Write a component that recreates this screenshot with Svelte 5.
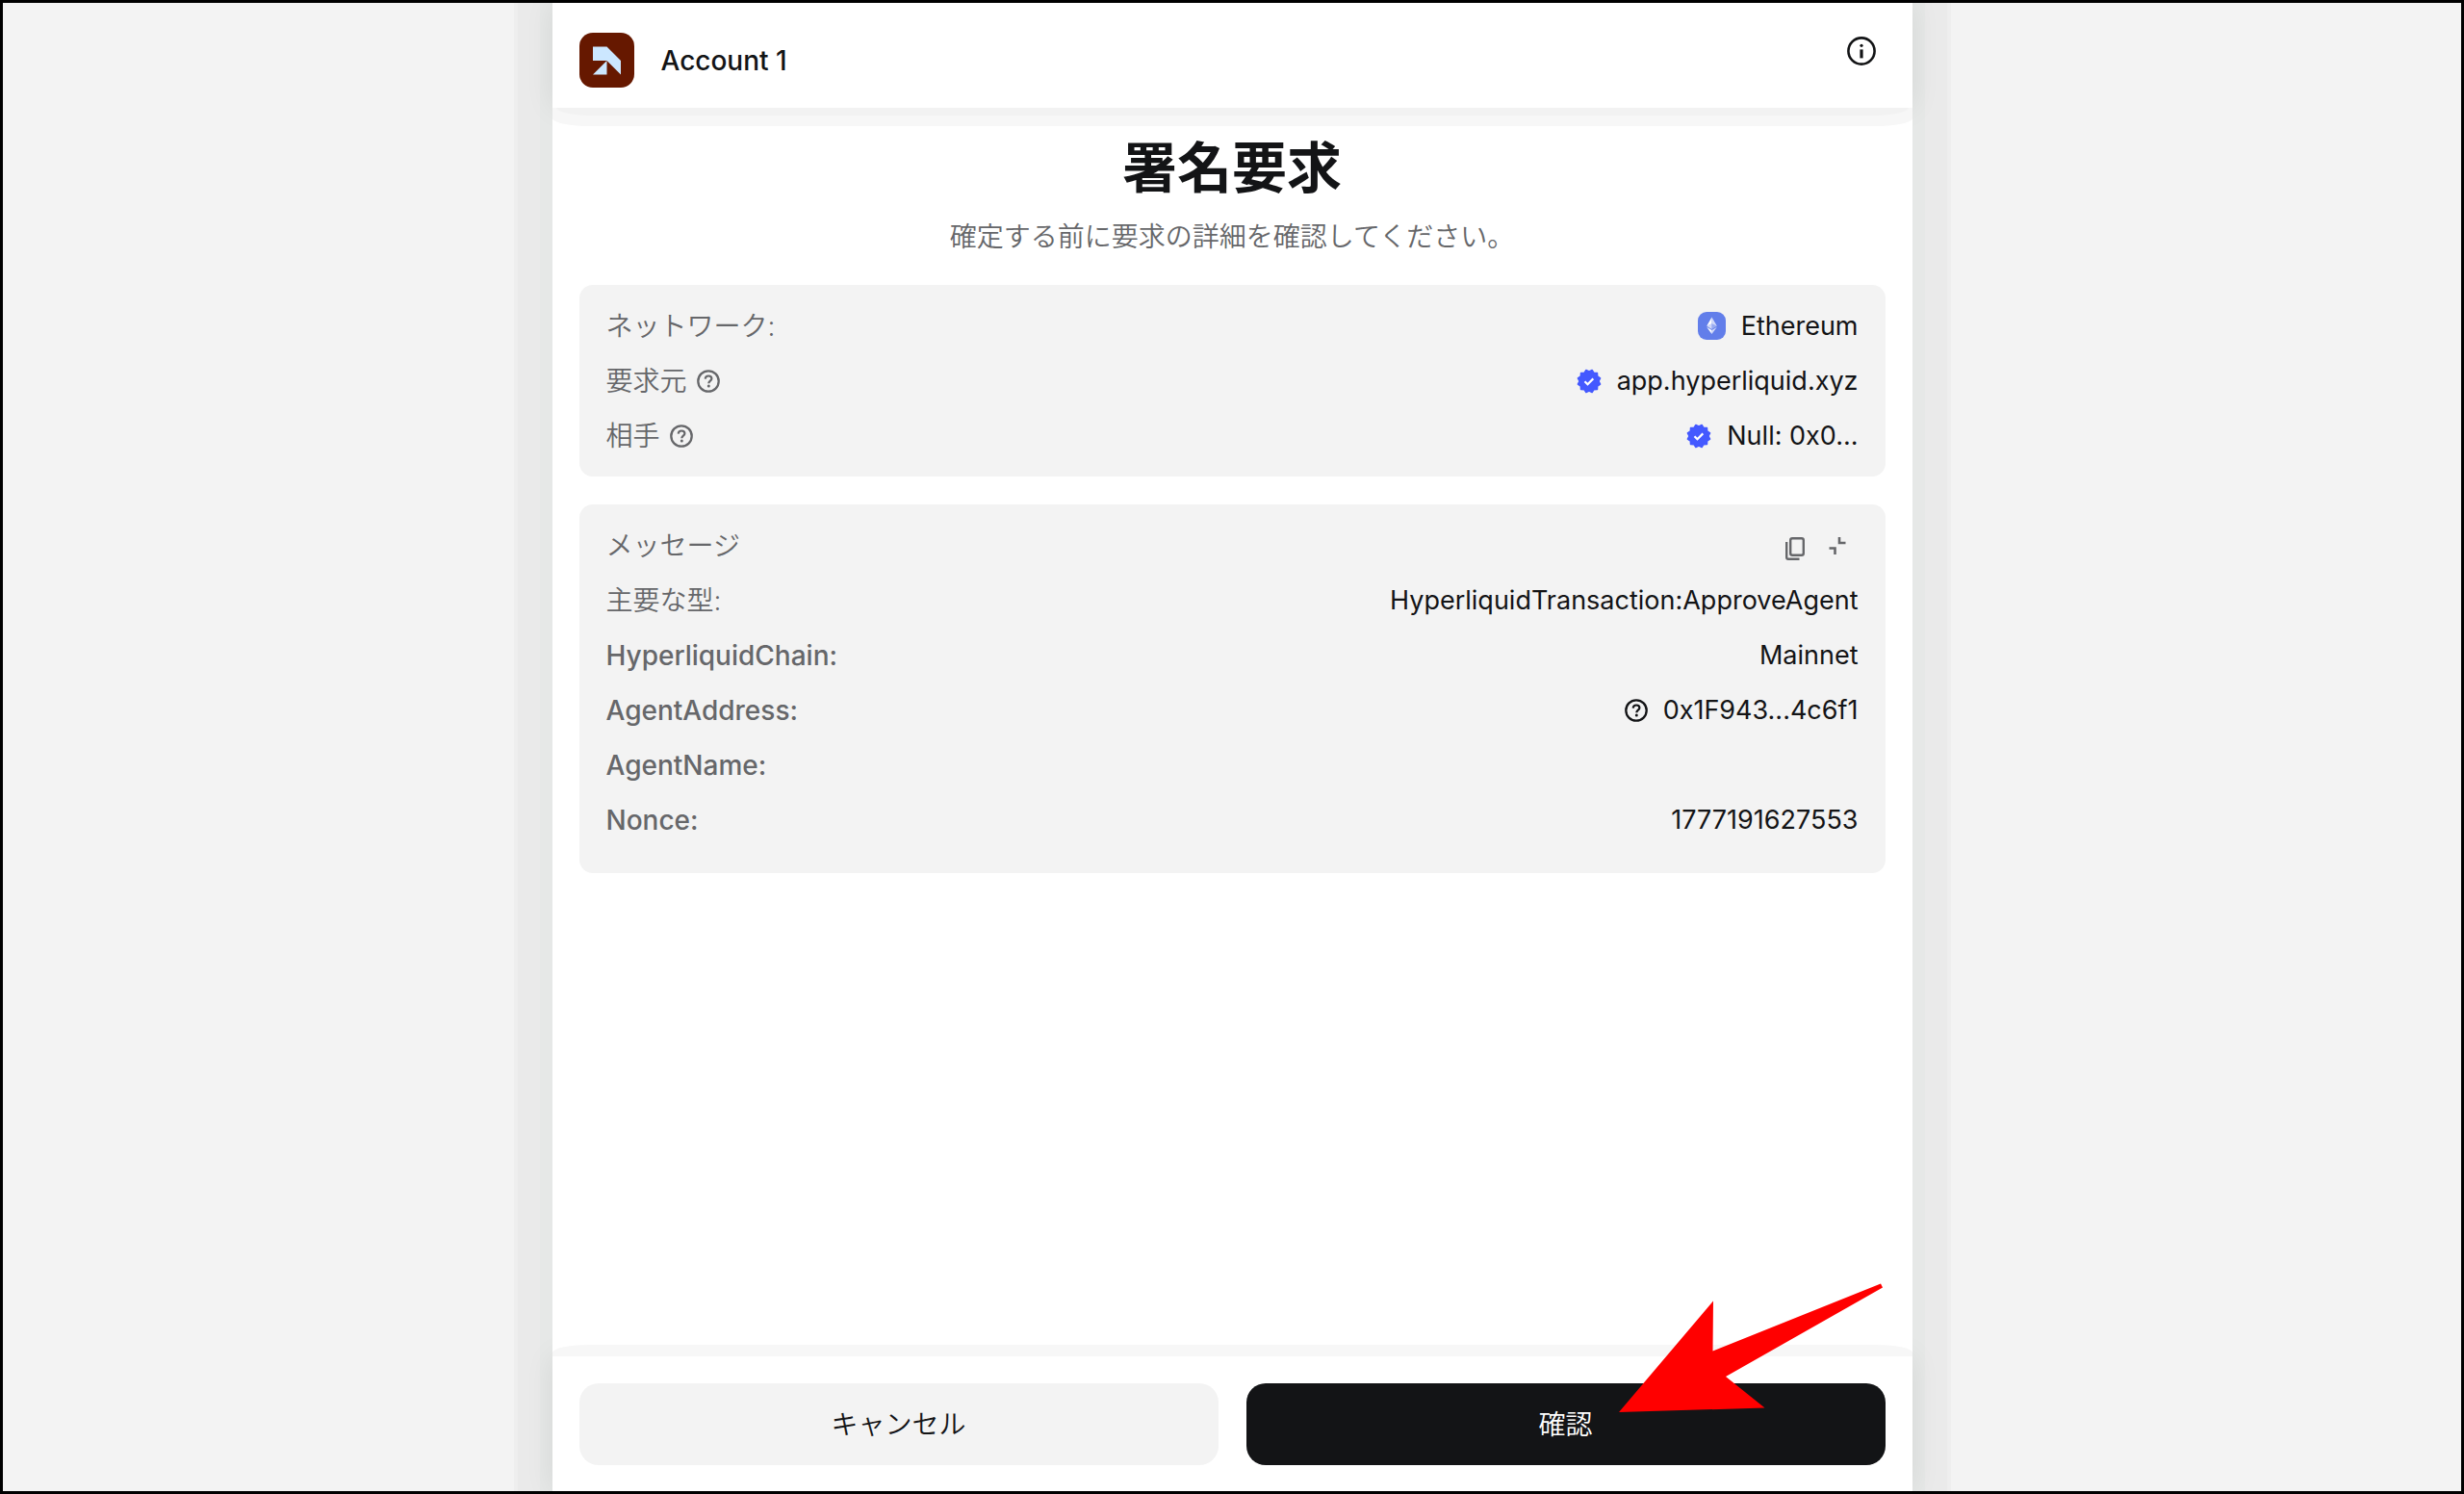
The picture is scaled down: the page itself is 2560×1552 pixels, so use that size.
<script lang="ts">
    type Row = { label: string; value: string; help?: boolean; badge?: 'eth' | 'verified' | 'unknown' };

    const accountName = 'Account 1';

    const requestRows: Row[] = [
        { label: 'ネットワーク:', value: 'Ethereum', badge: 'eth' },
        { label: '要求元', value: 'app.hyperliquid.xyz', help: true, badge: 'verified' },
        { label: '相手', value: 'Null: 0x0...', help: true, badge: 'verified' }
    ];

    const messageRows: Row[] = [
        { label: '主要な型:', value: 'HyperliquidTransaction:ApproveAgent' },
        { label: 'HyperliquidChain:', value: 'Mainnet' },
        { label: 'AgentAddress:', value: '0x1F943...4c6f1', badge: 'unknown' },
        { label: 'AgentName:', value: '' },
        { label: 'Nonce:', value: '1777191627553' }
    ];

    let collapsed = false;

    // twelve rounded teeth around the verified badge
    const teeth = Array.from({ length: 24 }, (_, i) => {
        const a = (Math.PI * 2 * i) / 24 + Math.PI / 12;
        const r = i % 2 === 0 ? 12 : 10;
        return `${(13 + r * Math.cos(a)).toFixed(2)},${(13 + r * Math.sin(a)).toFixed(2)}`;
    }).join(' ');

    async function copyMessage() {
        const text = messageRows.map((r) => `${r.label} ${r.value}`).join('\n');
        await navigator.clipboard.writeText(text);
    }
</script>

{#snippet helpIcon()}
    <svg width="24" height="24" viewBox="0 0 24 24" fill="none" stroke="currentColor">
        <circle cx="12" cy="12" r="10.7" stroke-width="2.3" />
        <path d="M8.7 9.6c.2-2 1.5-3.1 3.4-3.1 1.9 0 3.3 1.1 3.3 2.8 0 2.3-3.1 2.5-3.1 4.9" stroke-width="2.2" />
        <circle cx="12.3" cy="17" r="1.5" fill="currentColor" stroke="none" />
    </svg>
{/snippet}

{#snippet row(r: Row)}
    <div class="row">
        <dt class:latin={/^[A-Z]/.test(r.label)}>
            {r.label}
            {#if r.help}{@render helpIcon()}{/if}
        </dt>
        <dd>
            {#if r.badge === 'eth'}
                <svg width="29" height="29" viewBox="0 0 29 29">
                    <rect width="29" height="29" rx="9" fill="#627eea" />
                    <path d="M14.5 5.5v6.7l5.4 2.6z" fill="#fff" fill-opacity=".7" />
                    <path d="M14.5 5.5 9.2 14.8l5.3-2.6z" fill="#fff" />
                    <path d="M14.5 18.9v4l5.4-7.1z" fill="#fff" fill-opacity=".7" />
                    <path d="M14.5 22.9v-4l-5.3-3.1z" fill="#fff" />
                    <path d="m14.5 17.9 5.4-3.1-5.4-2.6z" fill="#fff" fill-opacity=".35" />
                    <path d="m9.2 14.8 5.3 3.1v-5.7z" fill="#fff" fill-opacity=".7" />
                </svg>
            {:else if r.badge === 'verified'}
                <svg width="26" height="26" viewBox="0 0 26 26">
                    <polygon points={teeth} fill="#4459ff" stroke="#4459ff" stroke-width="1.5" stroke-linejoin="round" />
                    <path d="m8.5 13.2 3 3 5.8-5.8" fill="none" stroke="#fff" stroke-width="2.2" />
                </svg>
            {:else if r.badge === 'unknown'}
                {@render helpIcon()}
            {/if}
            <span>{r.value}</span>
        </dd>
    </div>
{/snippet}

<div class="page">
    <div class="panel">
        <header>
            <svg width="57" height="57" viewBox="0 0 57 57">
                <rect width="57" height="57" rx="14" fill="#661800" />
                <path d="M14 14.5h14.5L43 29v14.5L28.5 29H14z" fill="#cce7ff" />
                <path d="M28.5 29v14.5H14z" fill="#cce7ff" />
            </svg>
            <h2>{accountName}</h2>
            <button class="icon-button info" type="button" aria-label="情報">
                <svg width="30" height="30" viewBox="0 0 30 30" fill="#131416">
                    <circle cx="15" cy="15" r="13.6" fill="none" stroke="#131416" stroke-width="2.6" />
                    <circle cx="15" cy="9.3" r="1.6" />
                    <path d="M13.4 13.4h3.2v9h-3.2z" />
                </svg>
            </button>
        </header>

        <main>
            <div class="edge edge-top"></div>
            <h1>署名要求</h1>
            <p class="subtitle">確定する前に要求の詳細を確認してください。</p>

            <dl class="card">
                {#each requestRows as r}
                    {@render row(r)}
                {/each}
            </dl>

            <section class="card message">
                <div class="row">
                    <h3>メッセージ</h3>
                    <div class="tools">
                        <button class="icon-button" type="button" aria-label="コピー" on:click={copyMessage}>
                            <svg width="28" height="32" viewBox="0 0 28 32" fill="none" stroke="#66676a" stroke-width="2.4">
                                <rect x="9.2" y="8.2" width="13.6" height="17.6" rx="2" />
                                <path d="M5.2 12v16q0 1.8 1.8 1.8H18.5" />
                            </svg>
                        </button>
                        <button class="icon-button" type="button" aria-label="折りたたむ" on:click={() => (collapsed = !collapsed)}>
                            <svg width="28" height="32" viewBox="0 0 28 32" fill="none" stroke="#66676a" stroke-width="2.6">
                                <path d="M16 7v6h6.5M5.5 18.5h6V25" />
                            </svg>
                        </button>
                    </div>
                </div>
                {#if !collapsed}
                    <dl>
                        {#each messageRows as r}
                            {@render row(r)}
                        {/each}
                    </dl>
                {/if}
            </section>
            <div class="edge edge-bottom"></div>
        </main>

        <footer>
            <button class="cancel" type="button">キャンセル</button>
            <button class="confirm" type="button">
                確認
                <svg class="pointer" width="274" height="134" viewBox="0 0 274 134">
                    <path d="M0 134 98 18.5 97.5 70.5 272 .5l2 4L111 97l40.5 32.5z" fill="#f00" />
                </svg>
            </button>
        </footer>
    </div>
</div>

<style>
    :global(body) {
        background: #f3f3f3;
    }
    .page {
        box-sizing: border-box;
        min-height: 100vh;
        border: 3px solid #000;
        background: #f3f3f3;
        color: #131416;
        display: flex;
        justify-content: center;
        overflow: hidden;
        font-family: Inter, "Noto Sans CJK JP", sans-serif;
        font-size: 28px;
        line-height: 42px;
    }
    .panel {
        width: 100%;
        max-width: 1413px;
        display: flex;
        flex-direction: column;
        background: #fff;
        box-shadow: 0 0 0 13px #e6e8e7, 0 0 0 36px #eaeaea, 0 0 0 40px #eee;
    }
    header {
        display: flex;
        align-items: center;
        gap: 28px;
        padding: 31px 28px 21px;
        background: #fff;
        box-shadow: 0 0 28px rgba(0, 0, 0, 0.08);
    }
    h1, h2, h3, p, dl, dt, dd {
        margin: 0;
        font-weight: 400;
        font-size: inherit;
    }
    h2 {
        flex: 1;
        font-weight: 500;
    }
    svg {
        display: block;
        flex: none;
    }
    button {
        border: none;
        font: inherit;
        cursor: pointer;
    }
    .icon-button {
        display: flex;
        padding: 8px;
        background: none;
    }
    .info {
        align-self: flex-start;
        margin: -4px 2px 0;
    }
    main {
        flex: 1;
        display: flex;
        flex-direction: column;
        padding: 0 28px;
        background: #fff;
        position: relative;
    }
    /* soft edges where the scroll area meets header and footer */
    .edge {
        margin: 0 -28px;
        background: #f7f7f7;
    }
    .edge-top {
        height: 19px;
        border-radius: 0 0 40px 40px / 0 0 8px 8px;
    }
    .edge-top::before {
        content: '';
        display: block;
        height: 8px;
        margin: 0 4px;
        background: #f2f2f2;
        border-radius: 0 0 40px 40px / 0 0 8px 8px;
    }
    .edge-bottom {
        height: 12px;
        margin-top: auto;
        border-radius: 40px 40px 0 0 / 8px 8px 0 0;
    }
    h1 {
        font-size: 57px;
        line-height: 88px;
        font-weight: 700;
        text-align: center;
    }
    .subtitle {
        margin: 6px 0 29px;
        color: #66676a;
        font-weight: 350;
        text-align: center;
    }
    .card {
        padding: 14px 28px;
        border-radius: 14px;
        background: #f3f3f3;
        margin-bottom: 29px;
    }
    .message {
        padding-bottom: 27px;
    }
    .row {
        display: flex;
        justify-content: space-between;
        align-items: center;
        height: 57px;
    }
    dt, h3 {
        display: flex;
        align-items: center;
        gap: 10px;
        color: #66676a;
        font-weight: 350;
    }
    .latin {
        font-weight: 500;
    }
    dd {
        display: flex;
        align-items: center;
        gap: 16px;
        font-size: 27px;
    }
    .tools {
        display: flex;
    }
    footer {
        display: flex;
        gap: 29px;
        padding: 28px 28px 27px;
        background: #fff;
        box-shadow: 0 0 28px rgba(0, 0, 0, 0.08);
    }
    footer button {
        flex: 1;
        height: 85px;
        border-radius: 20px;
        font-weight: 350;
    }
    .cancel {
        background: #f3f3f3;
        color: #131416;
    }
    .confirm {
        position: relative;
        background: #131416;
        color: #fff;
    }
    .pointer {
        position: absolute;
        right: 3px;
        bottom: 55px;
    }
</style>
